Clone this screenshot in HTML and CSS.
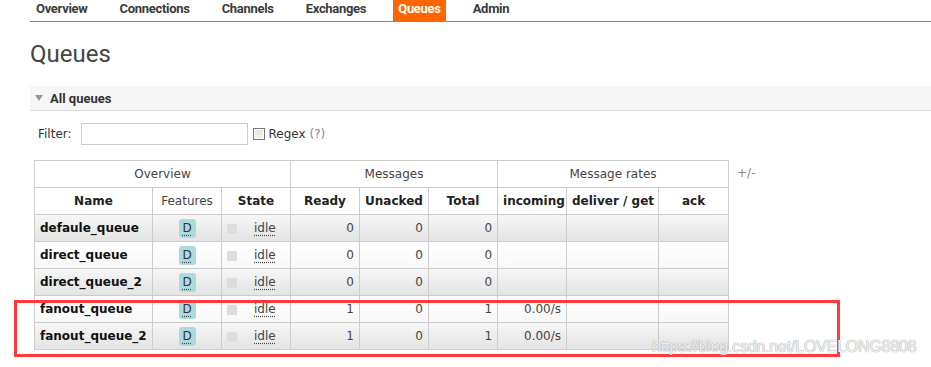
FILE: index.html
```html
<!DOCTYPE html>
<html lang="en">
	<head>
		<meta charset="UTF-8" />
		<meta name="viewport" content="width=device-width, initial-scale=1.0" />
		<title>Queues</title>

		<link rel="stylesheet" href="styles.css">
	</head>

	<body>
		<div class="navbar">
			<ul>
				<li><a href="#">Overview</a></li>
				<li><a href="#">Connections</a></li>
				<li><a href="#">Channels</a></li>
				<li><a href="#">Exchanges</a></li>
				<li class="active"><a href="#">Queues</a></li>
				<li><a href="#">Admin</a></li>
			</ul>
		</div>

		<div class="main">
			<h1>Queues</h1>

			<div class="section-head"><span class="arrow"></span>All queues</div>

			<div class="filter">
				<label>Filter:</label>
				<input type="text" class="filter-input" />
				<span class="check"></span>
				<span class="regex">Regex <span class="help">(?)</span></span>
			</div>

			<div class="table-wrap">
				<table class="list">
					<colgroup>
						<col style="width: 118px">
						<col style="width: 69px">
						<col style="width: 69px">
						<col style="width: 69px">
						<col style="width: 69px">
						<col style="width: 69px">
						<col style="width: 69px">
						<col style="width: 92px">
						<col style="width: 70px">
					</colgroup>
					<thead>
						<tr class="group">
							<th colspan="3">Overview</th>
							<th colspan="3">Messages</th>
							<th colspan="3">Message rates</th>
						</tr>
						<tr>
							<th>Name</th>
							<th class="plain">Features</th>
							<th>State</th>
							<th>Ready</th>
							<th>Unacked</th>
							<th>Total</th>
							<th>incoming</th>
							<th>deliver / get</th>
							<th>ack</th>
						</tr>
					</thead>
					<tbody>
						<tr class="alt">
							<td class="name">defaule_queue</td>
							<td class="c"><span class="badge"><span class="abbr">D</span></span></td>
							<td class="state"><span class="dot"></span><span class="abbr">idle</span></td>
							<td class="r">0</td>
							<td class="r">0</td>
							<td class="r">0</td>
							<td class="r"></td>
							<td class="r"></td>
							<td class="r"></td>
						</tr>
						<tr>
							<td class="name">direct_queue</td>
							<td class="c"><span class="badge"><span class="abbr">D</span></span></td>
							<td class="state"><span class="dot"></span><span class="abbr">idle</span></td>
							<td class="r">0</td>
							<td class="r">0</td>
							<td class="r">0</td>
							<td class="r"></td>
							<td class="r"></td>
							<td class="r"></td>
						</tr>
						<tr class="alt">
							<td class="name">direct_queue_2</td>
							<td class="c"><span class="badge"><span class="abbr">D</span></span></td>
							<td class="state"><span class="dot"></span><span class="abbr">idle</span></td>
							<td class="r">0</td>
							<td class="r">0</td>
							<td class="r">0</td>
							<td class="r"></td>
							<td class="r"></td>
							<td class="r"></td>
						</tr>
						<tr>
							<td class="name">fanout_queue</td>
							<td class="c"><span class="badge"><span class="abbr">D</span></span></td>
							<td class="state"><span class="dot"></span><span class="abbr">idle</span></td>
							<td class="r">1</td>
							<td class="r">0</td>
							<td class="r">1</td>
							<td class="r">0.00/s</td>
							<td class="r"></td>
							<td class="r"></td>
						</tr>
						<tr class="alt">
							<td class="name">fanout_queue_2</td>
							<td class="c"><span class="badge"><span class="abbr">D</span></span></td>
							<td class="state"><span class="dot"></span><span class="abbr">idle</span></td>
							<td class="r">1</td>
							<td class="r">0</td>
							<td class="r">1</td>
							<td class="r">0.00/s</td>
							<td class="r"></td>
							<td class="r"></td>
						</tr>
					</tbody>
				</table>
				<span class="toggle">+/-</span>
			</div>
		</div>

		<div class="highlight"></div>
		<div class="watermark">https://blog.csdn.net/LOVELONG8808</div>
	</body>
</html>
```

FILE: styles.css
```css
* {
	margin: 0;
	box-sizing: border-box;
}

body {
	font-family: "DejaVu Sans", Verdana, sans-serif;
	font-size: 12px;
	color: #444;
	background: #fff;
}

.navbar ul {
	list-style: none;
	padding: 0 0 0 1px;
	margin-left: 30px;
	display: flex;
	gap: 22px;
	height: 22px;
	border-bottom: 1px solid #f60;
}
.navbar li {
	display: block;
}
.navbar a {
	display: block;
	padding: 0 5px 4px;
	line-height: 17px;
	font-family: Roboto, "Liberation Sans", sans-serif;
	font-size: 13px;
	font-weight: bold;
	letter-spacing: -0.3px;
	color: #3a3a3a;
	text-decoration: none;
}
.navbar li.active a {
	background: #f60;
	color: #fff;
}

.main {
	padding-left: 30px;
}

h1 {
	margin-top: 18px;
	font-family: Roboto, "Liberation Sans", sans-serif;
	font-size: 24px;
	font-weight: normal;
	line-height: 28px;
	color: #444;
}

.section-head {
	margin-top: 18px;
	height: 25px;
	display: flex;
	align-items: center;
	padding-left: 5px;
	background: #f6f6f6;
	border-bottom: 1px solid #ddd;
	font-family: Roboto, "Liberation Sans", sans-serif;
	font-size: 13px;
	font-weight: bold;
	color: #333;
}
.arrow {
	width: 0;
	height: 0;
	border-left: 4.5px solid transparent;
	border-right: 4.5px solid transparent;
	border-top: 6px solid #999;
	margin-right: 7px;
}

.filter {
	margin-top: 12px;
	padding-left: 8px;
	height: 22px;
	display: flex;
	align-items: center;
	color: #333;
}
.filter-input {
	margin-left: 9px;
	width: 167px;
	height: 22px;
	border: 1px solid #ccc;
	outline: none;
}
.check {
	margin-left: 5px;
	width: 12px;
	height: 12px;
	border: 1px solid #777;
	background: linear-gradient(#e4e4e4, #f4f4f4);
	box-shadow: inset 0 0 0 1px #fff;
}
.regex {
	margin-left: 4px;
}
.help {
	color: #888;
}

.table-wrap {
	margin-top: 15px;
	padding-left: 4px;
	display: flex;
	align-items: flex-start;
}
.toggle {
	margin-left: 8px;
	line-height: 27px;
	color: #888;
}

table.list {
	border-collapse: collapse;
	table-layout: fixed;
	width: 694px;
}
.list th,
.list td {
	height: 27px;
	padding: 0 5px;
	border: 1px solid #ccc;
	white-space: nowrap;
	vertical-align: middle;
}
.list th {
	font-weight: bold;
	color: #222;
	text-align: center;
	background: #fff;
}
.list tr.group th,
.list th.plain {
	font-weight: normal;
	color: #444;
}
.list tbody tr {
	background: linear-gradient(#fff, #f7f7f7);
}
.list tbody tr.alt {
	background: linear-gradient(#f6f6f6, #e3e3e3);
}
.list td.name {
	font-weight: bold;
	color: #111;
}
.list td.c {
	text-align: center;
}
.list td.r {
	text-align: right;
}

.badge {
	display: inline-block;
	width: 17px;
	height: 19px;
	line-height: 18px;
	border-radius: 3px;
	background: #abdbdd;
	color: #333;
	text-align: center;
	vertical-align: middle;
}
.abbr {
	text-decoration: underline dotted #444;
	text-underline-offset: 3px;
}
.state {
	white-space: nowrap;
}
.dot {
	display: inline-block;
	width: 10px;
	height: 10px;
	background: #ddd;
	vertical-align: middle;
	margin-right: 17px;
}

.highlight {
	position: absolute;
	left: 14px;
	top: 300px;
	width: 826px;
	height: 57px;
	border: 3px solid #ff3a3a;
}
.watermark {
	position: absolute;
	left: 652px;
	top: 338px;
	font-family: "Liberation Sans", Arial, sans-serif;
	font-size: 16px;
	letter-spacing: -0.2px;
	white-space: nowrap;
	color: rgba(255, 255, 255, 0.85);
	text-shadow: 0 0 1px #999, 0 0 1px #bbb;
}
```
